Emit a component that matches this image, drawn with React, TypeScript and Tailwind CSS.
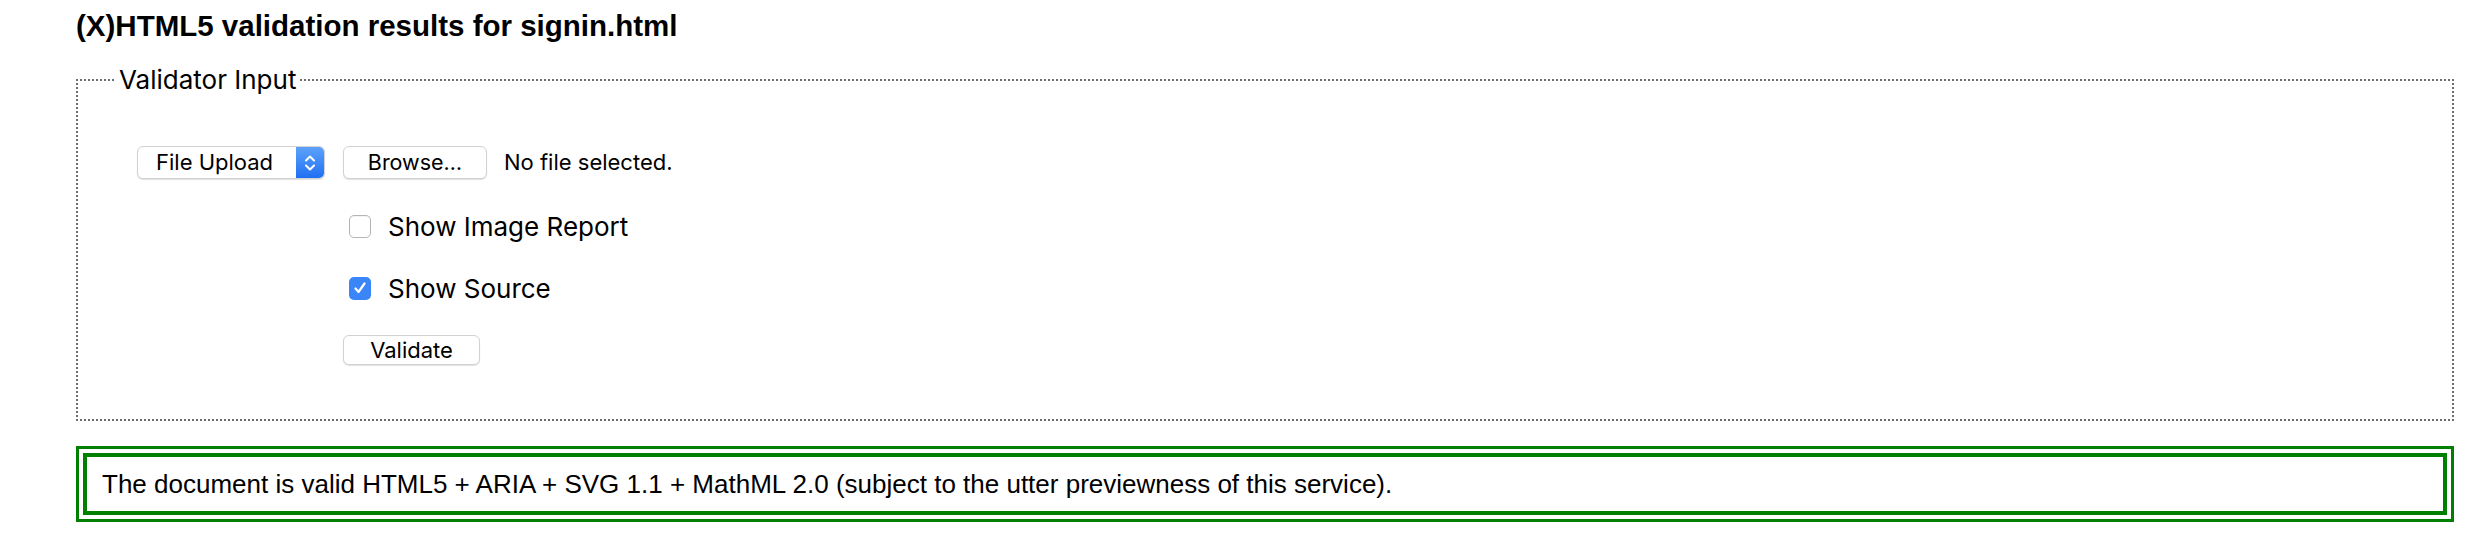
import React from "react";

function Chevrons() {
  return (
    <svg width="14" height="22" viewBox="0 0 14 22" fill="none">
      <path d="M3 8.5 L7 4.5 L11 8.5" stroke="white" strokeWidth="2" strokeLinecap="round" strokeLinejoin="round" />
      <path d="M3 13.5 L7 17.5 L11 13.5" stroke="white" strokeWidth="2" strokeLinecap="round" strokeLinejoin="round" />
    </svg>
  );
}

function Check() {
  return (
    <svg width="16" height="16" viewBox="0 0 16 16" fill="none">
      <path d="M3.5 8.5 L6.5 12 L12.5 3.5" stroke="white" strokeWidth="2.2" strokeLinecap="round" strokeLinejoin="round" />
    </svg>
  );
}

export default function App() {
  const sys = "font-['Inter','Noto_Sans',sans-serif]";
  return (
    <div className="w-[2478px] h-[550px] bg-white text-black pl-[76px] pr-[24px] overflow-hidden">
      <h2 className="pt-[9px] text-[29.5px] leading-[34px] font-bold font-['Liberation_Sans',Arial,sans-serif]">
        (X)HTML5 validation results for signin.html
      </h2>
      <fieldset className="mt-[23px] border-2 border-dotted border-[#6e6e6e] pl-[37px] pr-0 pb-[54px]">
        <legend className={`px-[4px] text-[26px] leading-[28px] ${sys}`}>Validator Input</legend>
        <div className="pt-[52px] pl-[22px] flex flex-col">
          <div className={`flex items-center ${sys}`}>
            <div className="flex w-[188px] h-[33px] rounded-[6px] border border-[#d2d2d2] shadow-[0_1px_1px_rgba(0,0,0,0.12)] overflow-hidden bg-white">
              <div className="flex-1 flex items-center pl-[18px] text-[22px]">File Upload</div>
              <div className="w-[28px] flex items-center justify-center bg-gradient-to-b from-[#5ca2fa] to-[#1f6ff2]">
                <Chevrons />
              </div>
            </div>
            <div className="ml-[18px] w-[144px] h-[33px] rounded-[6px] border border-[#d2d2d2] shadow-[0_1px_1px_rgba(0,0,0,0.12)] bg-white flex items-center justify-center text-[21.5px]">
              Browse…
            </div>
            <div className="ml-[17px] text-[22px]">No file selected.</div>
          </div>
          <div className={`ml-[206px] mt-[31px] flex flex-col ${sys}`}>
            <div className="flex items-center h-[32px] pl-[6px]">
              <div className="w-[22px] h-[23px] rounded-[5px] border border-[#b5b5b5] bg-white shadow-[inset_0_1px_1px_rgba(0,0,0,0.05)]" />
              <span className="ml-[17px] text-[26px]">Show Image Report</span>
            </div>
            <div className="flex items-center h-[32px] pl-[6px] mt-[30px]">
              <div className="w-[22px] h-[23px] rounded-[5px] bg-[#3a85f7] flex items-center justify-center">
                <Check />
              </div>
              <span className="ml-[17px] text-[26px]">Show Source</span>
            </div>
            <div className="mt-[31px] w-[137px] h-[30px] rounded-[6px] border border-[#d2d2d2] shadow-[0_1px_1px_rgba(0,0,0,0.12)] bg-white flex items-center justify-center text-[22px]">
              Validate
            </div>
          </div>
        </div>
      </fieldset>
      <div className="mt-[25px] border-[3px] border-[#008000] p-[4px]">
        <div className="border-[4px] border-[#008000] h-[62px] flex items-center pl-[15px] text-[26px] font-['Liberation_Sans',Arial,sans-serif]">
          The document is valid HTML5 + ARIA + SVG 1.1 + MathML 2.0 (subject to the utter previewness of this service).
        </div>
      </div>
    </div>
  );
}
